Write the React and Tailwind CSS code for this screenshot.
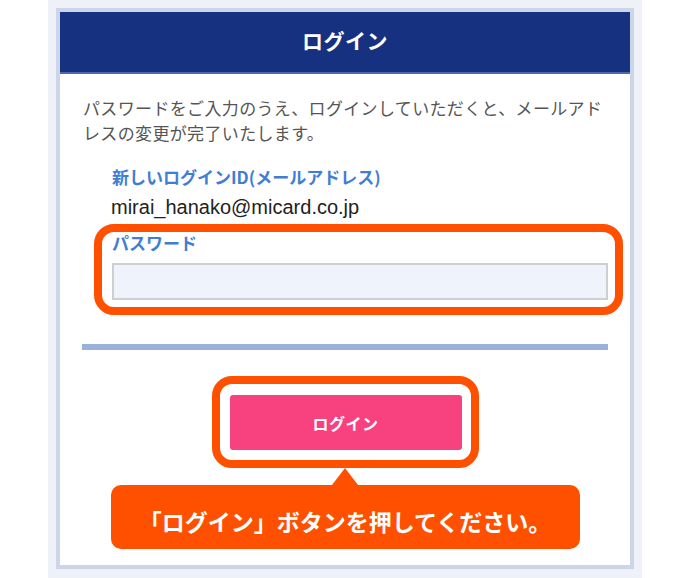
export default function App() {
  const jp = { fontFamily: '"Noto Sans CJK JP", "Noto Sans", sans-serif' };
  return (
    <div className="w-[690px] h-[578px] bg-white flex justify-center" style={jp}>
      <div className="w-[594px] h-[578px] bg-[#eef2f8] pt-[8px] px-[8px]">
        <div className="h-[561px] border-4 border-[#cdd6e6] bg-white flex flex-col">
          <div className="h-[62px] bg-[#16317f] border-b-2 border-[#4d68b0] flex items-center justify-center">
            <span className="text-white font-bold text-[21px] leading-none tracking-[0.5px] -mt-[4px]">ログイン</span>
          </div>
          <p className="mt-[21px] ml-[23px] text-[17px] leading-[25px] text-[#555555] tracking-[0.35px]">
            パスワードをご入力のうえ、ログインしていただくと、メールアド
            <br />
            レスの変更が完了いたします。
          </p>
          <div className="mt-[20px] ml-[52px] text-[17px] leading-[24px] font-bold text-[#3f7ed2]">
            新しいログインID(メールアドレス)
          </div>
          <div
            className="mt-[6px] ml-[51px] text-[20px] leading-[24px] text-[#222222]"
            style={{ fontFamily: '"Liberation Sans", Arial, sans-serif' }}
          >
            mirai_hanako@micard.co.jp
          </div>
          <div className="mt-[5px] ml-[34px] w-[529px] border-8 border-[#ff5000] rounded-[20px] pl-[10px] pr-[7px] pb-[7px]">
            <div className="text-[17px] leading-[22px] font-bold text-[#3f7ed2]">パスワード</div>
            <div className="mt-[9px] h-[37px] bg-[#eef3fc] border-2 border-[#cfcfcf]"></div>
          </div>
          <div className="mt-[29px] ml-[22px] w-[526px] h-[6px] bg-[#9bb2d8]"></div>
          <div className="flex flex-col items-center">
            <div className="mt-[26px] w-[267px] h-[92px] border-8 border-[#ff5000] rounded-[20px] pt-[11px] pl-[10px] pr-[9px]">
              <div className="h-[55px] rounded-[3px] bg-[#f8417f] flex items-center justify-center">
                <span className="text-white font-bold text-[16px] leading-none tracking-[0.5px]">ログイン</span>
              </div>
            </div>
            <div className="w-0 h-0 border-l-[13px] border-r-[13px] border-b-[17px] border-l-transparent border-r-transparent border-b-[#ff5000]"></div>
            <div className="w-[469px] h-[64px] rounded-[10px] bg-[#ff5000] flex items-center justify-center">
              <span className="text-white font-bold text-[23px] leading-none mt-[8px]">「ログイン」ボタンを押してください。</span>
            </div>
          </div>
        </div>
      </div>
    </div>
  );
}
